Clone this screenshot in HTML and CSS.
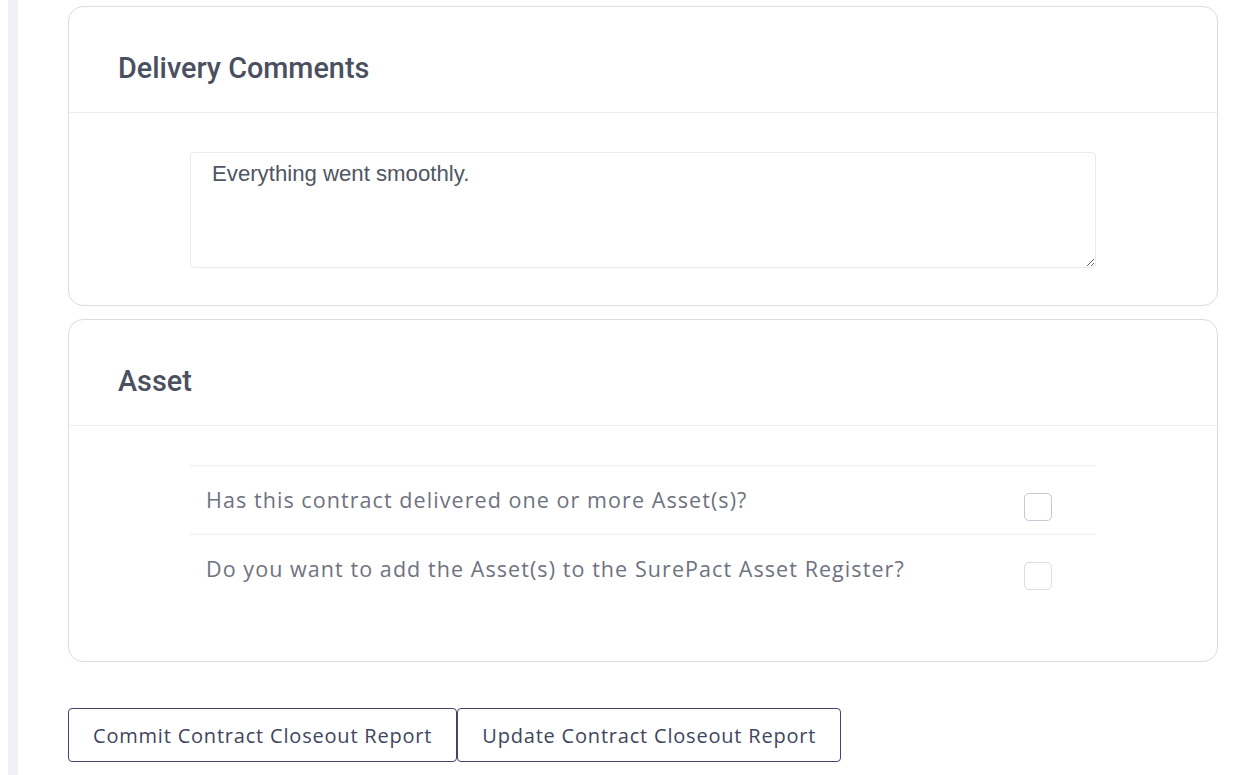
FILE: index.html
```html
<!DOCTYPE html>
<html lang="en">
<head>
<meta charset="utf-8">
<title>Contract Closeout</title>
<link rel="stylesheet" href="styles.css">
</head>
<body>
<div class="layout">
  <div class="gutter"></div>
  <div class="strip"></div>
  <main class="main">
    <section class="card">
      <header class="card-header"><h2 class="card-title">Delivery Comments</h2></header>
      <div class="card-body">
        <textarea class="comments">Everything went smoothly.</textarea>
      </div>
    </section>
    <section class="card">
      <header class="card-header"><h2 class="card-title">Asset</h2></header>
      <div class="card-body asset-body">
        <div class="qtable">
          <div class="qrow">
            <div class="qtext">Has this contract delivered one or more Asset(s)?</div>
            <div class="qcheck"><span class="box box-dark"></span></div>
          </div>
          <div class="qrow">
            <div class="qtext">Do you want to add the Asset(s) to the SurePact Asset Register?</div>
            <div class="qcheck"><span class="box"></span></div>
          </div>
        </div>
      </div>
    </section>
    <div class="actions">
      <button class="btn">Commit Contract Closeout Report</button>
      <button class="btn">Update Contract Closeout Report</button>
    </div>
  </main>
</div>
</body>
</html>
```

FILE: styles.css
```css
* { box-sizing: border-box; }
html, body { margin: 0; padding: 0; background: #ffffff; }
body { height: 775px; overflow: hidden; }
.layout { display: flex; min-height: 775px; }
.gutter { width: 8px; flex: none; }
.strip { width: 10px; flex: none; background: #eff0f6; }
.main { flex: 1; padding: 6px 22px 0 50px; }
.card {
  border: 1px solid #dcdcdc;
  border-radius: 15px;
  background: #fff;
  margin-bottom: 13px;
}
.card-header {
  height: 106px;
  border-bottom: 1px solid #eceef3;
  display: flex;
  align-items: center;
  padding: 0 49px;
}
.card-title {
  margin: 0;
  font-family: Roboto, "Liberation Sans", sans-serif;
  font-weight: 500;
  font-size: 28.8px;
  color: #4a5060;
  padding-top: 17px;
}
.card-body { padding: 39px 121px 37px; }
.comments {
  display: block;
  width: 100%;
  height: 116px;
  border: 1px solid #e8eaef;
  border-radius: 4px;
  padding: 8px 21px;
  font-family: "Liberation Sans", Arial, sans-serif;
  font-size: 22.2px;
  color: #505663;
  resize: vertical;
  outline: none;
}
.asset-body { padding-bottom: 59px; }
.qtable { border-top: 1px solid #eef0f4; }
.qrow {
  display: grid;
  grid-template-columns: 1fr 116px;
  height: 68px;
  align-items: center;
}
.qrow + .qrow { border-top: 1px solid #eef0f4; }
.qtext {
  padding-left: 16px;
  padding-bottom: 1px;
  font-family: "Open Sans", sans-serif;
  font-size: 21.5px;
  letter-spacing: 1.07px;
  color: #6f7280;
}
.qcheck { display: flex; justify-content: center; padding-top: 14px; }
.box {
  width: 28px; height: 28px;
  border: 1.5px solid #dadce6;
  border-radius: 5px;
  background: #fff;
}
.box-dark { border-color: #c5c8d8; }
.actions { display: flex; margin-top: 46px; }
.btn {
  height: 54px;
  padding: 0 24px;
  background: #fff;
  border: 1.5px solid #46426b;
  border-radius: 4px;
  font-family: "Open Sans", sans-serif;
  font-size: 20px;
  letter-spacing: 0.8px;
  color: #3f4460;
  cursor: pointer;
}
```
